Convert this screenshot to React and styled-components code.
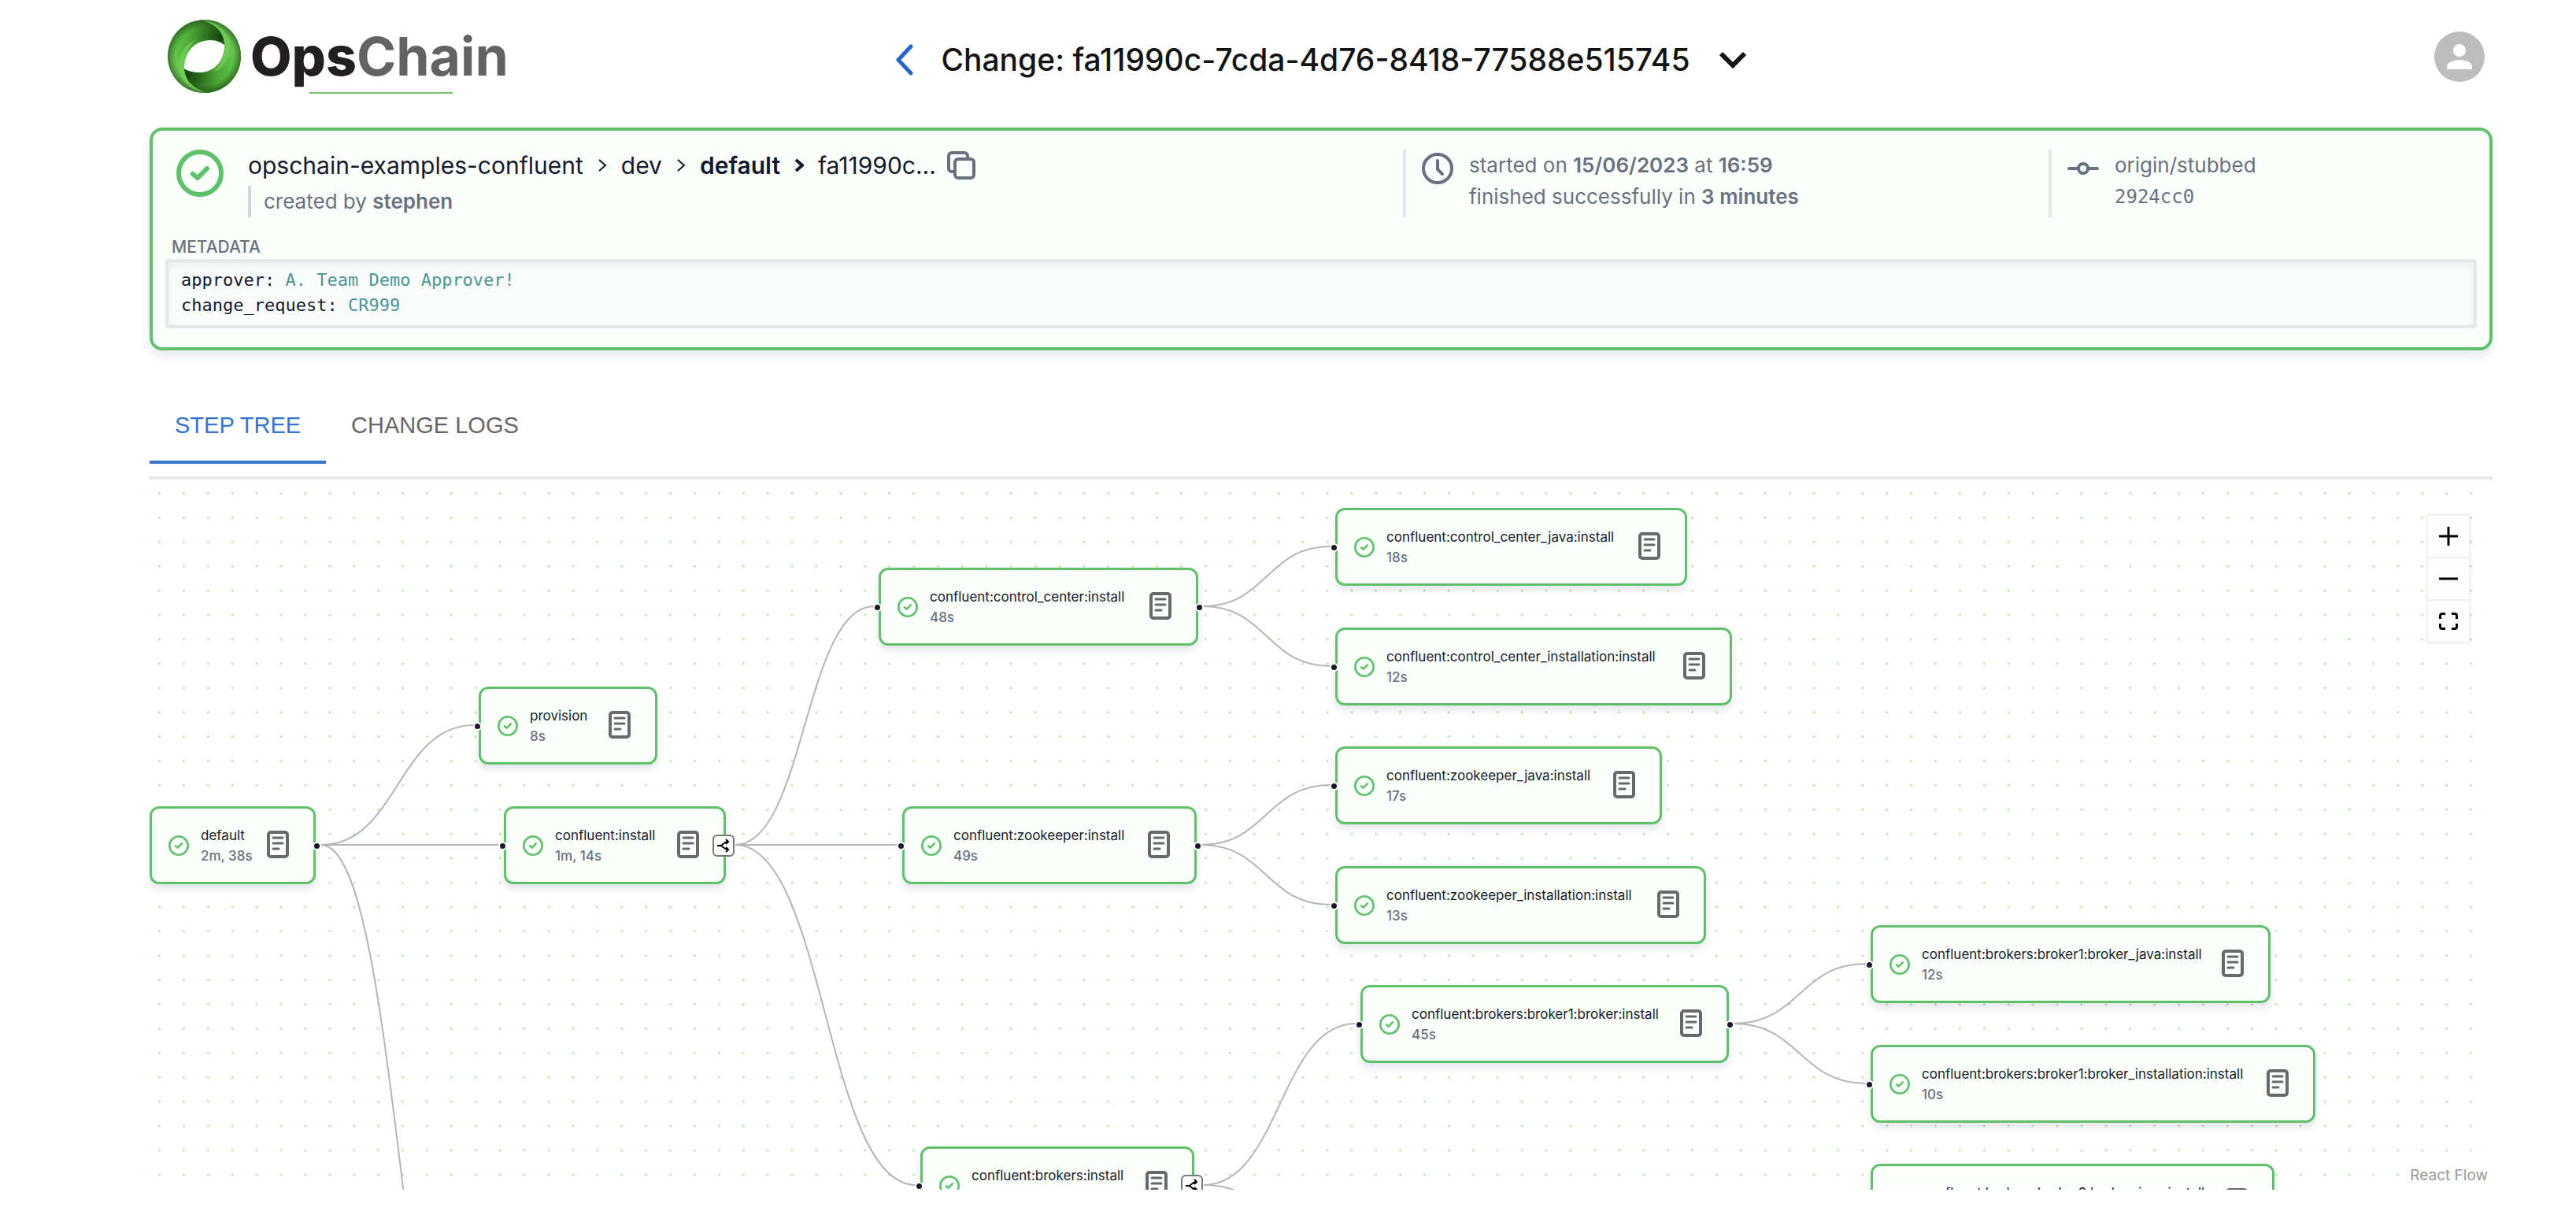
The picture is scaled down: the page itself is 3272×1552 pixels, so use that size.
import React from "react";
import styled, { createGlobalStyle, css } from "styled-components";

const sans = `Inter, "Open Sans", sans-serif`;
const mono = `"DejaVu Sans Mono", "Liberation Mono", monospace`;
const green = "#5fc26b";
const tint = "#fafffb";
const ink = "#15192b";
const muted = "#6b7080";
const rule = "#e5e7eb";

const GlobalStyle = createGlobalStyle`
  *, *::before, *::after { box-sizing: border-box; }
  body { margin: 0; background: #fff; color: ${ink}; font-family: ${sans}; }
  button { font: inherit; color: inherit; background: none; border: 0; padding: 0; cursor: pointer; }
  a { color: inherit; text-decoration: none; }
  h1, p, ol, pre { margin: 0; padding: 0; font: inherit; }
  svg { display: block; }
`;

const Page = styled.div`
  display: flex;
  flex-direction: column;
  height: 100vh;
  padding: 0 106px 41px 190px;
`;

const Header = styled.header`
  display: grid;
  grid-template-columns: 1fr auto 1fr;
  align-items: center;
  height: 144px;
  margin-bottom: 18px;
  flex: none;
`;

const LogoLink = styled.a`
  justify-self: start;
  padding-left: 23px;
`;

const TitleGroup = styled.div`
  display: flex;
  align-items: center;
  padding-top: 7px;
`;

const Title = styled.h1`
  margin: 0 36px 0 34px;
  font-size: 39px;
  line-height: 48px;
  font-weight: 500;
  color: #141414;
  white-space: nowrap;
`;

const Avatar = styled.button`
  display: grid;
  place-items: center;
  justify-self: end;
  width: 64px;
  height: 64px;
  margin-right: 10px;
  border-radius: 50%;
  background: #bdbdbd;
`;

const Summary = styled.section`
  flex: none;
  padding: 24px 0;
  background: ${tint};
  border: 4px solid ${green};
  border-radius: 16px;
  box-shadow: 0 8px 12px rgba(40, 50, 100, 0.1);
`;

const SummaryGrid = styled.div`
  display: grid;
  grid-template-columns: 397fr 205fr 140fr;
  height: 86px;
`;

const Overview = styled.div`
  display: flex;
  gap: 31px;
  padding-left: 30px;
`;

const StatusIcon = styled.svg`
  flex: none;
`;

const Crumbs = styled.ol`
  display: flex;
  align-items: center;
  list-style: none;
  height: 40px;
  margin-bottom: 6px;
  font-size: 30px;
  line-height: 40px;
  white-space: nowrap;
`;

const Crumb = styled.li`
  display: flex;
  align-items: center;
  font-weight: ${(p) => (p.$strong ? 600 : 400)};
`;

const Separator = styled.svg`
  margin: 0 18px;
`;

const CopyButton = styled.button`
  margin-left: 14px;
`;

const Creator = styled.p`
  padding-left: 16px;
  border-left: 4px solid #d1d5db;
  font-size: 26px;
  line-height: 40px;
  color: ${muted};

  b { font-weight: 600; }
`;

const Fact = styled.div`
  display: flex;
  align-items: flex-start;
  gap: 20px;
  padding-left: 20px;
  border-left: 4px solid ${rule};
  font-size: 26px;
  line-height: 40px;
  color: ${muted};
  white-space: nowrap;

  svg { margin-top: 4px; }
  b { font-weight: 600; }
`;

const Sha = styled.code`
  display: block;
  font-family: ${mono};
  font-size: 24px;
`;

const MetaLabel = styled.p`
  margin: 26px 0 3px 24px;
  font-size: 21px;
  line-height: 24px;
  font-weight: 500;
  color: ${muted};
`;

const MetaBox = styled.pre`
  margin: 0 16px;
  padding: 7px 16px 9px;
  border: 4px solid ${rule};
  border-radius: 4px;
  background: #fafcfb;
  box-shadow: inset 0 4px 8px rgba(0, 0, 0, 0.06);
  font-family: ${mono};
  font-size: 22px;
  line-height: 32px;

  span { color: #4b9593; }
`;

const Tabs = styled.div`
  display: flex;
  flex: none;
  margin-top: 48px;
  padding-bottom: 16px;
  border-bottom: 4px solid ${rule};
`;

const Tab = styled.button`
  height: 96px;
  padding: 2px 32px 0;
  border-bottom: 4px solid transparent;
  font-family: "Liberation Sans", Arial, sans-serif;
  font-size: 29px;
  color: #666;
  text-transform: uppercase;

  ${(p) =>
    p.$active &&
    css`
      color: #3575cf;
      border-color: #3575cf;
    `}
`;

const Canvas = styled.main`
  position: relative;
  flex: 1;
  min-height: 0;
  overflow: hidden;
`;

const Backdrop = styled.svg`
  position: absolute;
  inset: 0;
  width: 100%;
  height: 100%;
`;

const NodeCard = styled.article`
  position: absolute;
  display: flex;
  align-items: center;
  height: 99px;
  padding: 0 31px 0 21px;
  background: ${tint};
  border: 3px solid ${green};
  border-radius: 12px;
  box-shadow: 0 6px 10px rgba(40, 50, 100, 0.12);
`;

const NodeText = styled.div`
  margin-left: 15px;
  font-size: 17px;
  line-height: 26px;
  white-space: nowrap;
`;

const Duration = styled.p`
  font-weight: 500;
  color: ${muted};
`;

const LogButton = styled.button`
  margin: 0 0 2px auto;
`;

const Handle = styled.span`
  position: absolute;
  top: 50%;
  ${(p) => (p.$side === "left" ? "left: -10px;" : "right: -10px;")}
  width: 11px;
  height: 11px;
  margin-top: -5px;
  border: 2px solid #fff;
  border-radius: 50%;
  background: #1a192b;
`;

const BranchButton = styled.button`
  position: absolute;
  top: 50%;
  right: -14px;
  display: grid;
  place-items: center;
  width: 28px;
  height: 28px;
  margin-top: -14px;
  border: 2px solid #777;
  border-radius: 6px;
  background: #fff;
`;

const Controls = styled.div`
  position: absolute;
  top: 46px;
  right: 30px;
  display: grid;
  gap: 2px;
  background: #eee;
  box-shadow: 0 0 4px 2px rgba(0, 0, 0, 0.08);
`;

const ControlButton = styled.button`
  display: grid;
  place-items: center;
  width: 52px;
  height: 52px;
  background: #fefefe;
`;

const Attribution = styled.a`
  position: absolute;
  right: 0;
  bottom: 0;
  padding: 4px 6px;
  background: rgba(255, 255, 255, 0.5);
  font-size: 19px;
  line-height: 28px;
  color: #999;
`;

const Logo = () => (
  <svg width="440" height="94" viewBox="0 0 440 94" role="img" aria-label="OpsChain">
    <defs>
      <radialGradient id="limbA" gradientUnits="userSpaceOnUse" cx="68" cy="22" r="72">
        <stop offset="0" stopColor="#174010" />
        <stop offset="0.22" stopColor="#2a6a1c" />
        <stop offset="0.55" stopColor="#4fa836" />
        <stop offset="0.8" stopColor="#5cbf45" />
        <stop offset="1" stopColor="#74cc5c" />
      </radialGradient>
      <radialGradient id="limbB" gradientUnits="userSpaceOnUse" cx="25" cy="71" r="72">
        <stop offset="0" stopColor="#174010" />
        <stop offset="0.22" stopColor="#2a6a1c" />
        <stop offset="0.55" stopColor="#4fa836" />
        <stop offset="0.8" stopColor="#5cbf45" />
        <stop offset="1" stopColor="#74cc5c" />
      </radialGradient>
      <radialGradient id="rim" gradientUnits="userSpaceOnUse" cx="46.5" cy="46.5" r="46.5">
        <stop offset="0.78" stopColor="#123c0c" stopOpacity="0" />
        <stop offset="1" stopColor="#123c0c" stopOpacity="0.6" />
      </radialGradient>
    </defs>
    <circle cx="46.5" cy="46.5" r="46.5" fill="url(#limbA)" />
    <path
      d="M42 0.2C62 4 72 18 72 31C72 54 58 67 40 67C31 67 24 64 21 62C21 76 32 89 51 92.8A46.5 46.5 0 0 0 42 0.2Z"
      fill="url(#limbB)"
    />
    <circle cx="46.5" cy="46.5" r="46.5" fill="url(#rim)" />
    <path d="M42 0.5C66 2 82 20 78 42C75 56 66 64 58 66C68 58 72 46 72 31C72 18 62 5 42 0.5Z" fill="#6fd054" opacity="0.75" />
    <path d="M51 92.5C27 91 11 73 15 51C18 37 27 29 35 27C25 35 21 47 21 62C21 75 31 88 51 92.5Z" fill="#6fd054" opacity="0.75" />
    <path d="M21 62C21 40 35 26 54 26C62 26 68 29 72 32C72 54 58 67 40 67C31 67 24 64 21 62Z" fill="#fff" />
    <text x="105" y="71" fontFamily={sans} fontSize="68" fontWeight="800" fill="#231f20">
      Ops<tspan fill="#636363" fontWeight="700">Chain</tspan>
    </text>
    <rect x="180" y="92" width="182" height="2" fill="#76c36a" />
  </svg>
);

const Check = ({ size }) => (
  <StatusIcon width={size} height={size} viewBox="0 0 60 60" fill="none" stroke={green} strokeWidth="6" strokeLinecap="round" strokeLinejoin="round">
    <circle cx="30" cy="30" r="27" />
    <path d="M21 31l6 5l12-12" />
  </StatusIcon>
);

const Angle = ({ strong }) => (
  <Separator width="12" height="18" viewBox="0 0 12 18" fill="none" stroke={ink} strokeWidth={strong ? 4 : 2} aria-hidden="true">
    <path d="M2 2l8 7l-8 7" />
  </Separator>
);

const LogIcon = () => (
  <svg width="28" height="35" viewBox="0 0 28 35" fill="none" stroke="#696969" strokeWidth="4" strokeLinecap="round">
    <rect x="2" y="2" width="24" height="31" rx="3" />
    <path strokeWidth="3" d="M8 9h12M8 16h12M8 23h7" />
  </svg>
);

const ForkIcon = () => (
  <svg width="18" height="18" viewBox="0 0 18 18" fill="none" stroke="#000" strokeWidth="2">
    <path d="M1 9h4C8 9 9 4 15 4M5 9C8 9 9 14 15 14M12 1l3 3l-3 3M12 11l3 3l-3 3" />
  </svg>
);

const NODES = [
  { x: 0, y: 415, w: 211, name: "default", time: "2m, 38s", out: true },
  { x: 418, y: 263, w: 227, name: "provision", time: "8s", in: true },
  { x: 450, y: 415, w: 282, name: "confluent:install", time: "1m, 14s", in: true, branch: true },
  { x: 926, y: 112, w: 406, name: "confluent:control_center:install", time: "48s", in: true, out: true },
  { x: 956, y: 415, w: 374, name: "confluent:zookeeper:install", time: "49s", in: true, out: true },
  { x: 979, y: 847, w: 348, name: "confluent:brokers:install", time: "1m, 4s", in: true, branch: true },
  { x: 1506, y: 36, w: 447, name: "confluent:control_center_java:install", time: "18s", in: true },
  { x: 1506, y: 188, w: 504, name: "confluent:control_center_installation:install", time: "12s", in: true },
  { x: 1506, y: 339, w: 415, name: "confluent:zookeeper_java:install", time: "17s", in: true },
  { x: 1506, y: 491, w: 471, name: "confluent:zookeeper_installation:install", time: "13s", in: true },
  { x: 1538, y: 642, w: 468, name: "confluent:brokers:broker1:broker:install", time: "45s", in: true, out: true },
  { x: 2186, y: 566, w: 508, name: "confluent:brokers:broker1:broker_java:install", time: "12s", in: true },
  { x: 2186, y: 718, w: 565, name: "confluent:brokers:broker1:broker_installation:install", time: "10s", in: true },
  { x: 2186, y: 869, w: 513, name: "confluent:brokers:broker2:broker_java:install", time: "11s", in: true },
];

const EDGES = [
  [218, 464, 412, 312],
  [218, 464, 444, 464],
  [218, 464, 418, 1270],
  [744, 464, 920, 161],
  [744, 464, 950, 464],
  [744, 464, 973, 896],
  [1338, 161, 1500, 85],
  [1338, 161, 1500, 237],
  [1336, 464, 1500, 388],
  [1336, 464, 1500, 540],
  [1339, 896, 1532, 691],
  [1339, 896, 1532, 994],
  [2012, 691, 2180, 615],
  [2012, 691, 2180, 767],
];

const edgePath = ([x1, y1, x2, y2]) => {
  const mid = (x1 + x2) / 2;
  return `M${x1} ${y1}C${mid} ${y1} ${mid} ${y2} ${x2} ${y2}`;
};

const StepNode = ({ node }) => (
  <NodeCard style={{ left: node.x, top: node.y, width: node.w }}>
    {node.in && <Handle $side="left" />}
    <Check size={26} />
    <NodeText>
      <p>{node.name}</p>
      <Duration>{node.time}</Duration>
    </NodeText>
    <LogButton aria-label={`View logs for ${node.name}`}>
      <LogIcon />
    </LogButton>
    {node.out && <Handle $side="right" />}
    {node.branch && (
      <BranchButton aria-label="Toggle children">
        <ForkIcon />
      </BranchButton>
    )}
  </NodeCard>
);

export default function App() {
  return (
    <>
      <GlobalStyle />
      <Page>
        <Header>
          <LogoLink href="#">
            <Logo />
          </LogoLink>
          <TitleGroup>
            <button aria-label="Back">
              <svg width="24" height="40" viewBox="0 0 24 40" fill="none" stroke="#2766cc" strokeWidth="5" strokeLinecap="round" strokeLinejoin="round">
                <path d="M20 3L4 20L20 37" />
              </svg>
            </button>
            <Title>Change: fa11990c-7cda-4d76-8418-77588e515745</Title>
            <button aria-label="Select change">
              <svg width="36" height="22" viewBox="0 0 36 22" fill="none" stroke="#141414" strokeWidth="6">
                <path d="M3 3l15 15L33 3" />
              </svg>
            </button>
          </TitleGroup>
          <Avatar aria-label="Account">
            <svg width="48" height="48" viewBox="0 0 24 24" fill="#fff">
              <path d="M12 12c2.21 0 4-1.79 4-4s-1.79-4-4-4-4 1.79-4 4 1.79 4 4 4zm0 2c-2.67 0-8 1.34-8 4v2h16v-2c0-2.66-5.33-4-8-4z" />
            </svg>
          </Avatar>
        </Header>

        <Summary>
          <SummaryGrid>
            <Overview>
              <Check size={60} />
              <div>
                <Crumbs>
                  <Crumb><a href="#">opschain-examples-confluent</a><Angle /></Crumb>
                  <Crumb><a href="#">dev</a><Angle /></Crumb>
                  <Crumb $strong><a href="#">default</a><Angle strong /></Crumb>
                  <Crumb>
                    <span>fa11990c...</span>
                    <CopyButton aria-label="Copy change id">
                      <svg width="36" height="36" viewBox="0 0 36 36" fill="none" stroke={muted} strokeWidth="4">
                        <rect x="10" y="10" width="24" height="24" rx="4" />
                        <path d="M10 26H6a4 4 0 0 1-4-4V6a4 4 0 0 1 4-4h16a4 4 0 0 1 4 4v4" />
                      </svg>
                    </CopyButton>
                  </Crumb>
                </Crumbs>
                <Creator>created by <b>stephen</b></Creator>
              </div>
            </Overview>
            <Fact>
              <svg width="40" height="40" viewBox="0 0 40 40" fill="none" stroke={muted} strokeWidth="4" strokeLinecap="round" strokeLinejoin="round">
                <circle cx="20" cy="20" r="18" />
                <path d="M20 10v11l6 6" />
              </svg>
              <div>
                <p>started on <b>15/06/2023</b> at <b>16:59</b></p>
                <p>finished successfully in <b>3 minutes</b></p>
              </div>
            </Fact>
            <Fact>
              <svg width="40" height="40" viewBox="0 0 40 40" fill="none" stroke={muted} strokeWidth="4" strokeLinecap="round">
                <circle cx="20" cy="20" r="6" />
                <path d="M2 20h12M26 20h12" />
              </svg>
              <div>
                <p>origin/stubbed</p>
                <Sha>2924cc0</Sha>
              </div>
            </Fact>
          </SummaryGrid>
          <MetaLabel>METADATA</MetaLabel>
          <MetaBox>
            {"approver: "}<span>A. Team Demo Approver!</span>
            {"\nchange_request: "}<span>CR999</span>
          </MetaBox>
        </Summary>

        <Tabs role="tablist">
          <Tab role="tab" aria-selected="true" $active>Step tree</Tab>
          <Tab role="tab" aria-selected="false">Change logs</Tab>
        </Tabs>

        <Canvas>
          <Backdrop aria-hidden="true">
            <defs>
              <pattern id="dots" x="-2.95" y="2.05" width="30.905" height="30.905" patternUnits="userSpaceOnUse">
                <circle cx="15.45" cy="15.45" r="1.6" fill="#b9e8ab" />
              </pattern>
            </defs>
            <rect width="100%" height="100%" fill="url(#dots)" />
            {EDGES.map((edge) => (
              <path key={edge.join()} d={edgePath(edge)} fill="none" stroke="#b5b5b9" strokeWidth="2" />
            ))}
          </Backdrop>
          {NODES.map((node) => (
            <StepNode key={node.name} node={node} />
          ))}
          <Controls>
            <ControlButton aria-label="Zoom in">
              <svg width="24" height="24" viewBox="0 0 24 24" stroke="#000" strokeWidth="3"><path d="M12 0v24M0 12h24" /></svg>
            </ControlButton>
            <ControlButton aria-label="Zoom out">
              <svg width="24" height="24" viewBox="0 0 24 24" stroke="#000" strokeWidth="3"><path d="M0 12h24" /></svg>
            </ControlButton>
            <ControlButton aria-label="Fit view">
              <svg width="24" height="22" viewBox="0 0 24 22" fill="none" stroke="#000" strokeWidth="3">
                <path d="M1.500 8V4a2.500 2.500 0 0 1 2.500-2.500H8M16 1.500h4A2.500 2.500 0 0 1 22.500 4v4M22.500 14v4a2.500 2.500 0 0 1-2.500 2.500h-4M8 20.500H4A2.500 2.500 0 0 1 1.500 18v-4" />
              </svg>
            </ControlButton>
          </Controls>
          <Attribution href="#">React Flow</Attribution>
        </Canvas>
      </Page>
    </>
  );
}
